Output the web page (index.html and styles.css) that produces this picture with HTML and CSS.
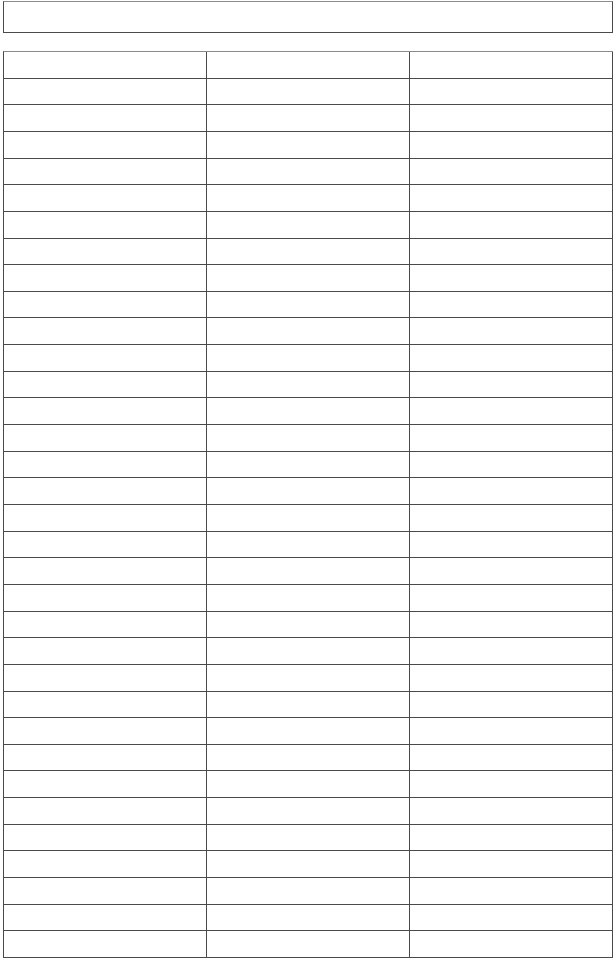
FILE: index.html
```html
<!DOCTYPE html>
<html>
<head>
<meta charset="utf-8">
<link rel="stylesheet" href="styles.css">
</head>
<body>
<div class="page">
  <div class="header-box"></div>
  <div class="sheet" id="sheet"></div>
</div>
<script>
  var s = document.getElementById('sheet');
  for (var i = 0; i < 102; i++) {
    var c = document.createElement('div');
    c.className = 'cell';
    s.appendChild(c);
  }
</script>
</body>
</html>
```

FILE: styles.css
```css
html, body {
  margin: 0;
  padding: 0;
  background: #ffffff;
  font-family: "Liberation Sans", Arial, sans-serif;
}
.page {
  padding: 1px 3px 0 3px;
  width: 610px;
}
.header-box {
  box-sizing: border-box;
  height: 32px;
  border: 1px solid #4a4a4a;
  border-top-color: #8a8a8a;
}
.sheet {
  box-sizing: border-box;
  margin-top: 18px;
  height: 907px;
  display: grid;
  grid-template-columns: repeat(3, 1fr);
  grid-template-rows: repeat(34, 1fr);
  border-top: 1px solid #8a8a8a;
  border-left: 1px solid #4a4a4a;
}
.cell {
  border-right: 1px solid #4a4a4a;
  border-bottom: 1px solid #4a4a4a;
}
```
